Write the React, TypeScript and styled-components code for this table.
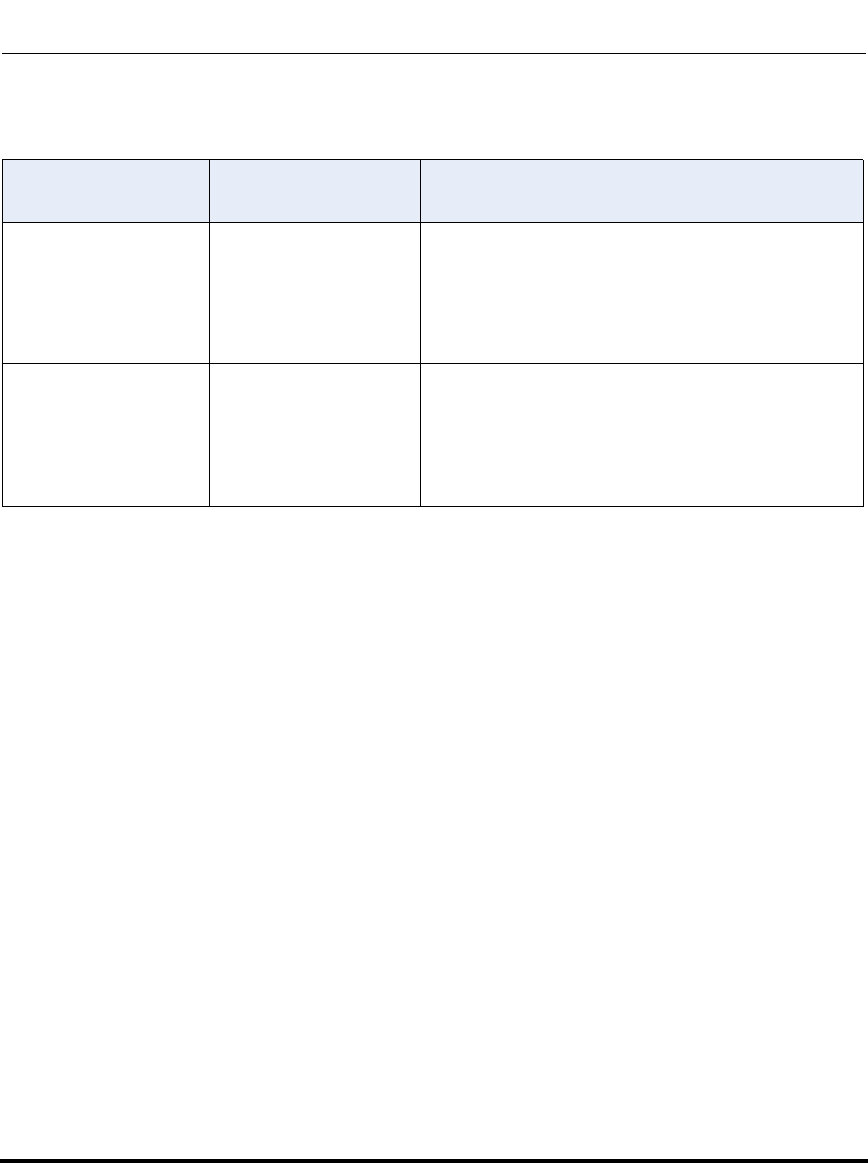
import React from "react";
import styled, { createGlobalStyle } from "styled-components";

const Global = createGlobalStyle`
  html, body { margin: 0; padding: 0; background: #ffffff; }
  body { font-family: "Liberation Sans", Arial, sans-serif; }
`;

const Page = styled.div`
  min-height: 1163px;
  display: flex;
  flex-direction: column;
  box-sizing: border-box;
`;

const TopRule = styled.hr`
  margin: 53px 2px 0 2px;
  border: none;
  height: 1px;
  background: #000;
`;

const Table = styled.div`
  margin: 105px 0 0 2px;
  width: 861px;
  box-sizing: border-box;
  display: grid;
  grid-template-columns: 207px 211px 443px;
  grid-template-rows: 63px 141px 143px;
  border-top: 1px solid #000;
  border-left: 1px solid #000;
`;

const Cell = styled.div<{ $head?: boolean }>`
  box-sizing: border-box;
  border-right: 1px solid #000;
  border-bottom: 1px solid #000;
  background: ${(p) => (p.$head ? "#e6edf8" : "#ffffff")};
`;

const BottomBar = styled.div`
  margin-top: auto;
  height: 4px;
  background: #000;
`;

export default function App() {
  const rows = [true, false, false];
  return (
    <>
      <Global />
      <Page>
        <TopRule />
        <Table>
          {rows.map((head, r) =>
            [0, 1, 2].map((c) => <Cell key={`${r}-${c}`} $head={head} />)
          )}
        </Table>
        <BottomBar />
      </Page>
    </>
  );
}
